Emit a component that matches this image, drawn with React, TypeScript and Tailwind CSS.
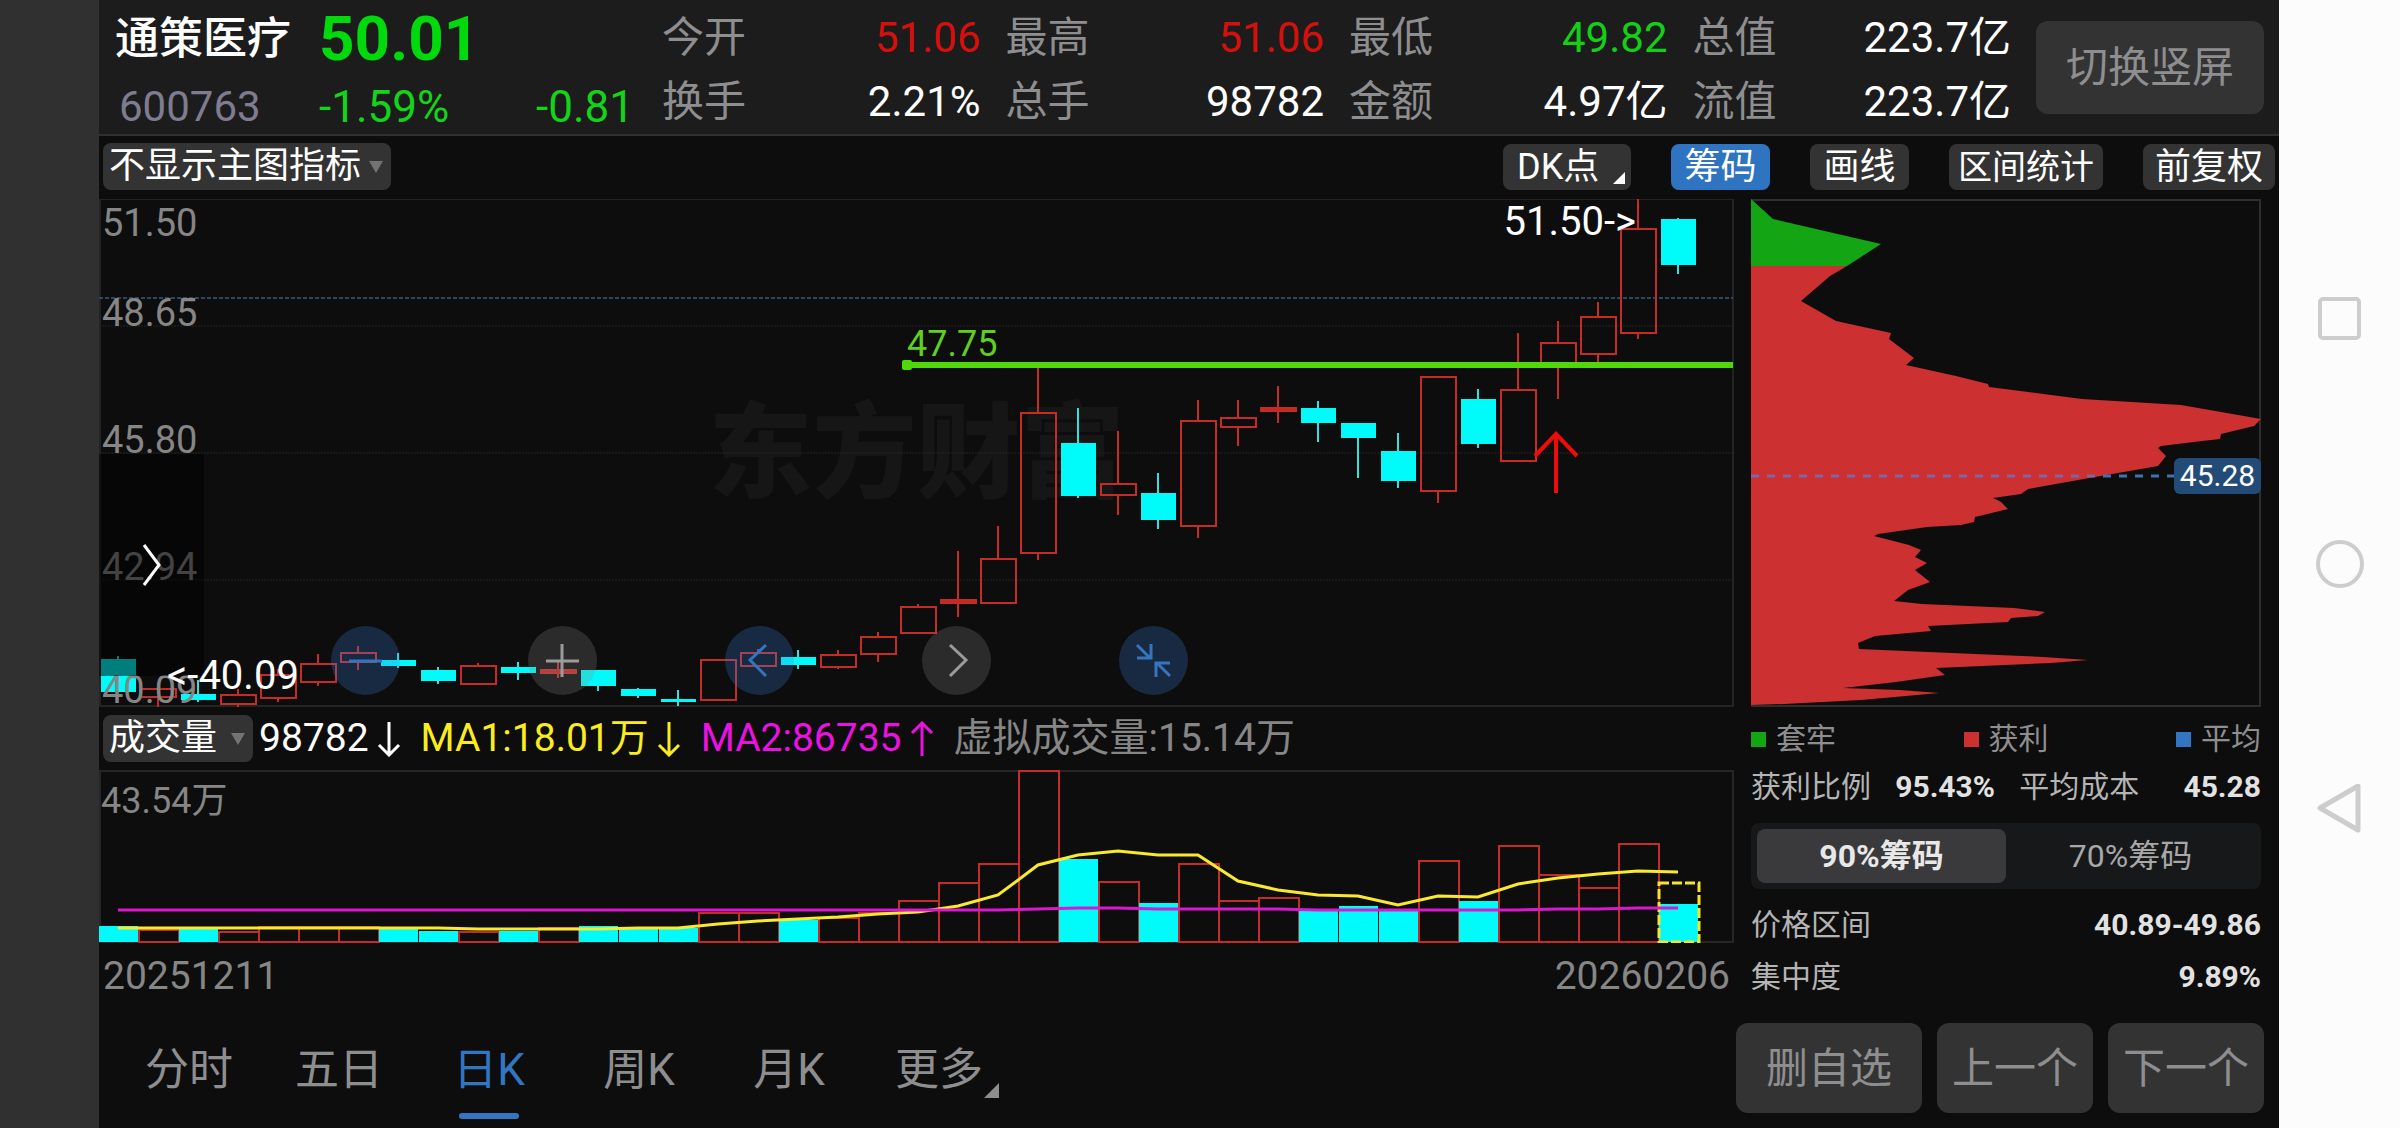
import { useState } from 'react';
import clsx from 'clsx';

type Candle = {
  up: boolean;
  high: number;
  top: number;
  bottom: number;
  low: number;
  volume: number;
};

const STEP = 40;
const FIRST = 19;

// [up, high, body top, body bottom, low, volume top]
const rawCandles: [number, number, number, number, number, number][] = [
  [0, 457, 460, 493, 493, 156],
  [1, 489, 489, 499, 508, 159],
  [0, 481, 495, 501, 503, 158],
  [1, 490, 495, 506, 508, 161],
  [1, 470, 475, 500, 503, 156],
  [1, 455, 464, 484, 487, 156],
  [1, 447, 453, 464, 471, 156],
  [0, 454, 461, 467, 469, 159],
  [0, 468, 471, 482, 485, 161],
  [1, 464, 466, 486, 486, 161],
  [0, 463, 468, 474, 481, 161],
  [1, 463, 470, 475, 479, 157],
  [0, 471, 471, 487, 492, 156],
  [0, 489, 490, 497, 499, 159],
  [0, 491, 500, 503, 507, 158],
  [1, 460, 460, 502, 502, 142],
  [1, 450, 453, 468, 468, 142],
  [0, 451, 458, 466, 470, 150],
  [1, 451, 455, 469, 470, 147],
  [1, 433, 437, 456, 463, 142],
  [1, 405, 407, 435, 435, 130],
  [1, 352, 400, 405, 418, 112],
  [1, 327, 359, 405, 405, 93],
  [1, 169, 213, 355, 361, 0],
  [0, 209, 244, 297, 299, 89],
  [1, 232, 284, 297, 316, 111],
  [0, 274, 294, 321, 330, 133],
  [1, 201, 221, 328, 339, 93],
  [1, 201, 218, 229, 247, 130],
  [1, 187, 208, 213, 224, 127],
  [0, 202, 209, 224, 243, 141],
  [0, 224, 224, 239, 279, 136],
  [0, 234, 252, 282, 289, 140],
  [1, 177, 177, 293, 304, 90],
  [0, 190, 200, 245, 249, 131],
  [1, 134, 190, 263, 263, 75],
  [1, 122, 143, 167, 200, 104],
  [1, 103, 117, 156, 163, 117],
  [1, 0, 29, 135, 140, 73],
  [0, 19, 20, 66, 75, 134],
];

const candles: Candle[] = rawCandles.map(([up, high, top, bottom, low, volume]) => ({
  up: up === 1,
  high,
  top,
  bottom,
  low,
  volume,
}));

const ma1 = [
  158, 158, 158, 158, 158, 158, 158, 158, 158, 159, 159, 159, 159, 158, 158, 154, 151, 149, 147, 144,
  142, 136, 125, 95, 85, 81, 85, 85, 111, 120, 125, 126, 135, 126, 127, 114, 108, 104, 101, 102,
];
const ma2 = [
  140, 140, 140, 140, 140, 140, 140, 140, 140, 140, 140, 140, 140, 140, 140, 140, 140, 140, 140, 140,
  140, 140, 140, 139, 138, 138, 139, 139, 139, 139, 140, 140, 140, 140, 140, 140, 139, 139, 138, 138,
];

const toPoints = (values: number[]) => values.map((y, i) => `${FIRST + i * STEP},${y}`).join(' ');

const stats = [
  { label: '今开', value: '51.06', color: 'text-[#d5100c]' },
  { label: '最高', value: '51.06', color: 'text-[#d5100c]' },
  { label: '最低', value: '49.82', color: 'text-[#14cf18]' },
  { label: '总值', value: '223.7亿', color: 'text-white' },
  { label: '换手', value: '2.21%', color: 'text-white' },
  { label: '总手', value: '98782', color: 'text-white' },
  { label: '金额', value: '4.97亿', color: 'text-white' },
  { label: '流值', value: '223.7亿', color: 'text-white' },
];

const priceLabels = [
  { text: '51.50', pos: 'top-[4px]' },
  { text: '48.65', pos: 'top-[94px]' },
  { text: '45.80', pos: 'top-[221px]' },
  { text: '42.94', pos: 'top-[348px]' },
  { text: '40.09', pos: 'top-[471px]' },
];

const CHIP_TRAPPED = '0,0 22,20 130,45 96,67 0,67';
const CHIP_PROFIT =
  '0,67 96,67 79,77 50,102 85,122 140,134 138,140 163,159 155,166 205,177 237,185 238,188 331,200 430,206 ' +
  '510,220 503,227 470,235 469,240 451,242 410,247 407,249 415,257 407,267 344,278 277,290 270,295 ' +
  '242,299 250,303 257,310 224,318 223,323 210,326 176,328 127,335 123,337 158,346 170,351 164,358 ' +
  '176,364 164,371 179,383 157,391 143,402 171,405 263,409 294,413 287,417 260,419 257,423 177,427 ' +
  '180,432 124,437 107,444 108,450 154,452 292,458 337,461 300,464 185,469 194,476 145,483 92,489 ' +
  '149,491 188,494 110,501 33,505 0,506';

function CornerMark({ className }: { className: string }) {
  return (
    <svg viewBox="0 0 12 12" className={className} aria-hidden="true">
      <path d="M12 0V12H0Z" fill="currentColor" />
    </svg>
  );
}

function TrendArrow({ down }: { down?: boolean }) {
  return (
    <svg viewBox="0 0 24 36" className="h-9 w-6" fill="none" stroke="currentColor" strokeWidth="3" aria-hidden="true">
      {down ? <path d="M12 1V34M2 24L12 34L22 24" /> : <path d="M12 35V2M2 12L12 2L22 12" />}
    </svg>
  );
}

function DropDown({ label, text, width }: { label: string; text: string; width: string }) {
  return (
    <div className={clsx('relative', width)}>
      <select
        aria-label={label}
        className="h-[47px] w-full appearance-none rounded-lg bg-[#333] pl-1.5 text-[36px] leading-[47px] text-white outline-none"
      >
        <option>{text}</option>
      </select>
      <svg viewBox="0 0 14 12" className="pointer-events-none absolute right-2 top-[18px] h-3 w-3.5" aria-hidden="true">
        <path d="M0 0H14L7 12Z" fill="#737373" />
      </svg>
    </div>
  );
}

function Header() {
  return (
    <header className="flex h-[136px] border-b-2 border-[#303030] bg-[#1c1c1c]">
      <div className="w-[563px] pl-4">
        <div className="flex h-[78px] items-center">
          <h1 className="w-[204px] text-[44px] font-medium leading-none text-white">通策医疗</h1>
          <span className="text-[62px] font-bold leading-none text-[#00d90b]">50.01</span>
        </div>
        <div className="flex h-[58px] items-center text-[42px] leading-none">
          <span className="w-[204px] pl-1 text-[#7f7c92]">600763</span>
          <span className="text-[44px] text-[#14d41a]">-1.59%</span>
          <span className="ml-auto pr-7 text-[44px] text-[#14d41a]">-0.81</span>
        </div>
      </div>
      <dl className="grid flex-1 grid-cols-4 gap-x-[25px] pt-1.5 text-[42px]">
        {stats.map((item) => (
          <div key={item.label} className="flex h-[63px] items-center justify-between leading-none">
            <dt className="text-[#8e8e90]">{item.label}</dt>
            <dd className={item.color}>{item.value}</dd>
          </div>
        ))}
      </dl>
      <button
        type="button"
        className="ml-[25px] mr-[15px] mt-[21px] h-[93px] w-[228px] rounded-xl bg-[#333] text-[42px] text-[#8e8e90]"
      >
        切换竖屏
      </button>
    </header>
  );
}

function Toolbar() {
  const button = 'h-[46px] rounded-lg text-[36px] leading-[46px] text-white';
  return (
    <div className="flex h-[63px] items-center gap-10 px-1 pb-0.5">
      <div className="mr-auto">
        <DropDown label="主图指标" text="不显示主图指标" width="w-[288px]" />
      </div>
      <button type="button" className={clsx(button, 'relative w-[128px] bg-[#333] pl-3.5 text-left')}>
        DK点
        <CornerMark className="absolute bottom-1.5 right-1.5 size-3" />
      </button>
      <button type="button" aria-pressed="true" className={clsx(button, 'w-[99px] bg-[#2f74c0]')}>
        筹码
      </button>
      <button type="button" className={clsx(button, 'w-[99px] bg-[#333]')}>画线</button>
      <button type="button" className="h-[46px] w-[154px] rounded-lg bg-[#333] text-[34px] leading-[46px] text-white">
        区间统计
      </button>
      <button type="button" className={clsx(button, 'w-[132px] bg-[#333]')}>前复权</button>
    </div>
  );
}

function RoundButton({ label, blue, d }: { label: string; blue?: boolean; d: string }) {
  return (
    <button
      type="button"
      aria-label={label}
      className={clsx(
        'size-[69px] rounded-full',
        blue ? 'bg-[#3982e1]/25 text-[#3674bf]' : 'bg-[#888888]/25 text-[#9b9b9b]',
      )}
    >
      <svg viewBox="0 0 69 69" className="size-full" fill="none" stroke="currentColor" strokeWidth="3">
        <path d={d} />
      </svg>
    </button>
  );
}

function PriceChart() {
  return (
    <section aria-label="日K" className="relative h-[508px]">
      <div className="absolute inset-x-0 top-[204px] text-center text-[104px] font-black leading-none text-[#161616]">
        东方财富
      </div>
      <svg viewBox="0 0 1635 508" preserveAspectRatio="none" className="absolute inset-0 size-full">
        <path d="M1 508V0H1634V507H0" fill="none" stroke="#242424" strokeWidth="2" />
        <path d="M0 127H1634M0 254H1634M0 381H1634" stroke="#242424" strokeWidth="1" strokeDasharray="2 1" />
        <path d="M0 99H1634" stroke="#2d4663" strokeWidth="2" strokeDasharray="4 2" />
        {candles.map((c, i) => {
          const x = FIRST + i * STEP;
          return c.up ? (
            <g key={i} stroke="#c42c2a" strokeWidth="2" fill="none">
              <path d={`M${x} ${c.high}V${c.top}M${x} ${c.bottom}V${c.low}`} />
              <rect
                x={x - 17}
                y={c.top + 1}
                width="35"
                height={c.bottom - c.top - 2}
                fill={c.bottom - c.top < 6 ? '#c42424' : 'none'}
              />
            </g>
          ) : (
            <g key={i}>
              <path d={`M${x} ${c.high}V${c.low}`} stroke="#34e0dc" strokeWidth="2" />
              <rect x={x - 17} y={c.top} width="35" height={c.bottom - c.top} fill="#00fbfb" />
            </g>
          );
        })}
        <path d="M807 166H1634" stroke="#50d80a" strokeWidth="6" />
        <rect x="803" y="161" width="10" height="10" rx="2" fill="#50d80a" />
        <path d="M1457 294V235M1436 257L1457 235L1478 257" fill="none" stroke="#ee0c0a" strokeWidth="4" />
      </svg>
      {priceLabels.map((item) => (
        <span key={item.text} className={clsx('absolute left-[3px] text-[38px] leading-10 text-[#868686]', item.pos)}>
          {item.text}
        </span>
      ))}
      <span className="absolute left-[808px] top-[125px] text-[36px] leading-10 text-[#5fd01f]">47.75</span>
      <span className="absolute right-[98px] top-[3px] text-[40px] leading-10 text-white">51.50-&gt;</span>
      <button type="button" aria-label="展开" className="absolute left-0 top-[255px] h-[222px] w-[105px] bg-black/50">
        <svg viewBox="0 0 105 222" className="size-full" fill="none" stroke="#fff" strokeWidth="3">
          <path d="M45 91L60 111L45 131" />
        </svg>
      </button>
      <span className="absolute left-[68px] top-[457px] text-[40px] leading-10 text-white">&lt;-40.09</span>
      <div className="absolute left-[232px] top-[427px] flex gap-32">
        <RoundButton label="缩小" blue d="M18 35H51" />
        <RoundButton label="放大" d="M18 35H51M34 18V51" />
        <RoundButton label="左移" blue d="M41 19L25 34L41 50" />
        <RoundButton label="右移" d="M28 19L44 34L28 50" />
        <RoundButton label="收起" blue d="M18 19L31 32M18 32H32V18M51 50L38 37M51 37H37V51" />
      </div>
    </section>
  );
}

function VolumeHeader() {
  return (
    <div className="flex h-[63px] items-center pl-1 text-[39px] leading-none">
      <DropDown label="副图指标" text="成交量" width="w-[150px]" />
      <span className="ml-1.5 mr-2 text-white">98782</span>
      <span className="text-white"><TrendArrow down /></span>
      <span className="ml-5 mr-2 text-[#fbec1e]">MA1:18.01万</span>
      <span className="text-[#fbec1e]"><TrendArrow down /></span>
      <span className="ml-5 mr-2 text-[#ea12e0]">MA2:86735</span>
      <span className="text-[#ea12e0]"><TrendArrow /></span>
      <span className="ml-5 text-[#868686]">虚拟成交量:15.14万</span>
    </div>
  );
}

function VolumeChart() {
  return (
    <section aria-label="成交量" className="relative h-[173px]">
      <svg viewBox="0 0 1635 173" preserveAspectRatio="none" className="absolute inset-0 size-full">
        <path d="M1 1H1634V172H1Z" fill="none" stroke="#262626" strokeWidth="2" />
        {candles.map((c, i) => {
          const x = FIRST + i * STEP;
          return c.up ? (
            <rect
              key={i}
              x={x - 19}
              y={c.volume + 1}
              width="40"
              height={171 - c.volume}
              fill="none"
              stroke="#c42c2a"
              strokeWidth="2"
            />
          ) : (
            <rect key={i} x={x - 19} y={c.volume} width="39" height={172 - c.volume} fill="#00fbfb" />
          );
        })}
        <rect x="1560" y="113" width="40" height="59" fill="none" stroke="#f5e62c" strokeWidth="3" strokeDasharray="10 3" />
        <polyline points={toPoints(ma1)} fill="none" stroke="#fbe92f" strokeWidth="3" />
        <polyline points={toPoints(ma2)} fill="none" stroke="#da18cf" strokeWidth="3" />
      </svg>
      <span className="absolute left-0.5 top-[11px] text-[36px] leading-10 text-[#868686]">43.54万</span>
    </section>
  );
}

function ChipPanel() {
  const [range, setRange] = useState('90%筹码');
  const legend = [
    { name: '套牢', color: 'bg-[#14a514]' },
    { name: '获利', color: 'bg-[#cc3030]' },
    { name: '平均', color: 'bg-[#3276c3]' },
  ];
  return (
    <aside className="mr-[18px] w-[510px] text-[30px] leading-10 text-[#b4b4b4]">
      <div className="relative h-[508px]">
        <svg viewBox="0 0 510 508" preserveAspectRatio="none" className="absolute inset-0 size-full">
          <rect x="1" y="1" width="508" height="506" fill="none" stroke="#2e2e2e" strokeWidth="2" />
          <polygon points={CHIP_TRAPPED} fill="#14a514" />
          <polygon points={CHIP_PROFIT} fill="#cc3030" />
          <path d="M0 277H344" stroke="#7d679c" strokeWidth="3" strokeDasharray="8 8" />
          <path d="M352 277H424" stroke="#3f73b0" strokeWidth="3" strokeDasharray="8 8" />
        </svg>
        <span className="absolute right-0 top-[259px] w-[87px] rounded-md bg-[#234b78] text-center leading-9 text-white">
          45.28
        </span>
      </div>
      <ul className="mt-3 flex justify-between text-[#8e8e90]">
        {legend.map((item) => (
          <li key={item.name} className="flex items-center gap-2.5">
            <i className={clsx('size-[15px]', item.color)} />
            {item.name}
          </li>
        ))}
      </ul>
      <div className="mt-2 flex justify-between">
        <span>获利比例</span>
        <strong className="text-[#e2e2e2]">95.43%</strong>
        <span>平均成本</span>
        <strong className="pl-5 text-[#e2e2e2]">45.28</strong>
      </div>
      <div className="mt-4 flex h-[66px] rounded-lg bg-[#17181a] p-1.5">
        {['90%筹码', '70%筹码'].map((name) => (
          <button
            key={name}
            type="button"
            aria-pressed={range === name}
            onClick={() => setRange(name)}
            className={clsx(
              'flex-1 rounded-lg text-[32px]',
              range === name ? 'bg-[#3a3a3c] font-bold text-[#e8e8e8]' : 'text-[#a8a8a8]',
            )}
          >
            {name}
          </button>
        ))}
      </div>
      <div className="mt-4 flex justify-between">
        <span>价格区间</span>
        <strong className="text-[#e2e2e2]">40.89-49.86</strong>
      </div>
      <div className="mt-3 flex justify-between">
        <span>集中度</span>
        <strong className="text-[#e2e2e2]">9.89%</strong>
      </div>
    </aside>
  );
}

function Footer() {
  const [tab, setTab] = useState('日K');
  const action = 'h-[90px] rounded-xl bg-[#333] text-[42px] text-[#8e8e90]';
  return (
    <footer className="flex h-[118px] px-[15px]">
      <nav className="flex flex-1">
        {['分时', '五日', '日K', '周K', '月K', '更多'].map((name) => (
          <button
            key={name}
            type="button"
            onClick={() => setTab(name)}
            className={clsx(
              'relative h-full w-[150px] pt-0.5 text-[44px] leading-none',
              tab === name ? 'text-[#3276c3]' : 'text-[#8e8e90]',
            )}
          >
            {name}
            {tab === name && (
              <i className="absolute bottom-[9px] left-[45px] h-1.5 w-[60px] rounded-full bg-[#3276c3]" />
            )}
            {name === '更多' && <CornerMark className="absolute bottom-[30px] right-[15px] size-[15px]" />}
          </button>
        ))}
      </nav>
      <div className="flex gap-[15px] pt-[13px]">
        <button type="button" className={clsx(action, 'w-[186px]')}>删自选</button>
        <button type="button" className={clsx(action, 'w-[156px]')}>上一个</button>
        <button type="button" className={clsx(action, 'w-[156px]')}>下一个</button>
      </div>
    </footer>
  );
}

function SystemNav() {
  const icon = 'size-[50px]';
  return (
    <nav className="flex w-[121px] flex-col items-center justify-center gap-[195px] bg-[#fcfcfc]">
      <button type="button" aria-label="最近任务">
        <svg viewBox="0 0 50 50" className={icon} fill="none" stroke="#cdcdcd" strokeWidth="4">
          <rect x="5" y="5" width="39" height="39" rx="3" />
        </svg>
      </button>
      <button type="button" aria-label="主屏幕">
        <svg viewBox="0 0 50 50" className={icon} fill="none" stroke="#cdcdcd" strokeWidth="4">
          <circle cx="25" cy="25" r="22" />
        </svg>
      </button>
      <button type="button" aria-label="返回">
        <svg viewBox="0 0 50 50" className={icon} fill="none" stroke="#cdcdcd" strokeWidth="5" strokeLinejoin="round">
          <path d="M5 24L43 2V46Z" />
        </svg>
      </button>
    </nav>
  );
}

export default function App() {
  return (
    <div className="flex min-h-screen bg-[#303030] font-[Roboto,'Noto_Sans_CJK_SC',sans-serif]">
      <div className="w-[99px] shrink-0" />
      <main className="min-w-0 flex-1 bg-[#0d0d0d]">
        <Header />
        <Toolbar />
        <div className="flex gap-[17px]">
          <div className="min-w-0 flex-1">
            <PriceChart />
            <VolumeHeader />
            <VolumeChart />
            <div className="flex h-[67px] items-center justify-between px-1 text-[39px] text-[#868686]">
              <time dateTime="2025-12-11">20251211</time>
              <time dateTime="2026-02-06">20260206</time>
            </div>
          </div>
          <ChipPanel />
        </div>
        <Footer />
      </main>
      <SystemNav />
    </div>
  );
}
